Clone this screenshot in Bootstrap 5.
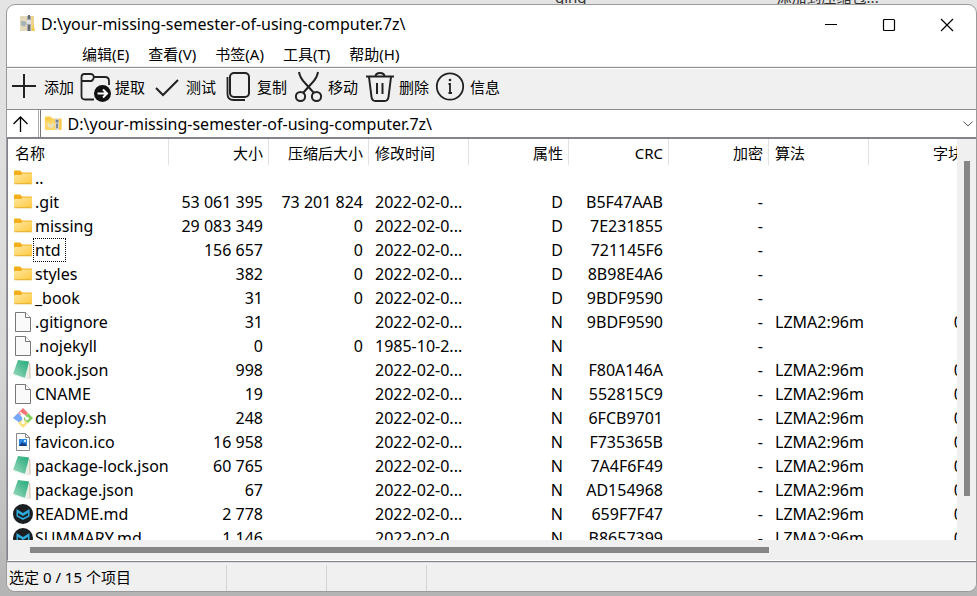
<!DOCTYPE html>
<html lang="zh-CN">
<head>
<meta charset="utf-8">
<meta name="viewport" content="width=device-width, initial-scale=1">
<title>D:\your-missing-semester-of-using-computer.7z\</title>
<link href="https://cdn.jsdelivr.net/npm/bootstrap@5.3.0/dist/css/bootstrap.min.css" rel="stylesheet">
<style>
body{font-family:"Noto Sans","Noto Sans CJK SC",sans-serif;font-size:15px;line-height:24px;color:#000;background:linear-gradient(#e4e4e4,#d8d8d8 60%,#b4b4b4)}
.desk-top{height:4px;font-size:15px;line-height:14px;background:#e4e4e4}
.desk-top span{margin-top:-10px;color:#333}
.desk-top .word-a{margin-left:555px}
.desk-top .word-b{margin-left:190px}
.desk-bottom{height:4px}
.app{margin-left:6px;border:1px solid #9a9a9a;border-radius:9px;background:#fff}
.titlebar{height:37px;padding-left:10px;font-size:16px}
.win-btn{width:58px;padding:0;border:0;background:none}
.menus{height:24px;padding-left:75px;gap:19px}
.menus button,.tools button,.up{padding:0;border:0;background:none;color:#000}
.menu-gap{height:1px;background:#f0f0f0}
.tools{background:#f0f0f0;border-top:1px solid #8e8e8e;box-shadow:inset 0 1px #fff;height:42px;gap:5px;padding-left:1px;padding-bottom:3px}
.tools button{gap:4px}
.address{border-top:1px solid #8a8a8a;border-bottom:2px solid #83838d;height:30px}
.up{width:32px;padding-right:4px;border-right:1px solid #aaa}
.combo{border-left:1px solid #777;margin-left:1px;padding-left:3px}
.combo .form-select{border:0;box-shadow:none;font-size:16px;line-height:24px;color:#000;padding:0 24px 0 5px;border-radius:0;background-image:url("data:image/svg+xml,%3csvg xmlns='http://www.w3.org/2000/svg' viewBox='0 0 12 12'%3e%3cpath fill='none' stroke='%23555' d='M1.500 3.500 6 8l4.500-4.500'/%3e%3c/svg%3e");background-size:12px;background-position:right 2px center}
.list-pane{border-left:1px solid #83838d;border-bottom:1px solid #fff}
.file-table{table-layout:fixed;width:961px}
.file-table th{height:27px;padding:0 6px;font-weight:400;background-image:linear-gradient(#e2e2e2,#e2e2e2);background-size:1px 26px;background-position:right top;background-repeat:no-repeat;white-space:nowrap}
.file-table td{height:24px;padding:0 6px;font-size:16px;white-space:nowrap;overflow:hidden;text-overflow:clip}
.file-table td:first-child{padding-left:5px}
.file-table .name-col{width:161px;padding-left:7px}
.file-icon{width:20px;height:20px;display:block;flex:none}
.file-name{padding:0 5px 0 2px}
.file-name.focused{outline:1px dotted #000;outline-offset:-1px}
.vbar{width:19px;background:#f0f0f0;padding:22px 6px 64px 7px}
.hbar{height:20px;background:#f0f0f0;padding:7px 188px 7px 22px}
.thumb{background:#868686}
.statusbar{background:#f0f0f0;border-top:1px solid #83868c;box-shadow:inset 0 1px #dcdcdc;height:30px;padding-top:3px;border-radius:0 0 8px 8px}
.statusbar div{border-right:1px solid #d4d4d4;width:100px}
.statusbar .status-main{width:220px;padding-left:2px}
</style>
<script src="https://cdn.jsdelivr.net/npm/bootstrap@5.3.0/dist/js/bootstrap.bundle.min.js"></script>
</head>
<body class="vh-100 overflow-hidden d-flex flex-column">
<svg class="position-absolute" width="0" height="0" aria-hidden="true">
<linearGradient id="gf" x2="1" y2="1"><stop stop-color="#ffe7a0"/><stop offset="1" stop-color="#fdc93f"/></linearGradient>
<linearGradient id="gb" x1="1" x2="0" y2="1"><stop stop-color="#1fa777"/><stop offset="1" stop-color="#9fdcc0"/></linearGradient>
<symbol id="folder" viewBox="0 0 20 20"><path d="M1 3.500q0-1 1-1h5l2 2h9q1 0 1 1V8H1z" fill="#f3ae1b"/><path d="M1 7h7l1.500-1.500H19V15q0 1-1 1H2q-1 0-1-1z" fill="url(#gf)"/><path d="M1.500 15.800h17" stroke="#e0a020" stroke-width=".8"/></symbol>
<symbol id="doc" viewBox="0 0 20 20"><path d="M2.500.500h10l5 5v14h-15z" fill="#fafafa" stroke="#777"/><path d="M12.500.500v5h5" fill="#fff" stroke="#777"/></symbol>
<symbol id="book" viewBox="0 0 20 20"><path d="m14 2 3.500 1 .5 15-5 1.800z" fill="#eeece6"/><path d="m16.500 3 .5 16" stroke="#d6cbb0" fill="none"/><path d="M5 0l11 1.500L12 18 0 14z" fill="url(#gb)"/><path d="m0 14 12 4v1.500L1 15z" fill="#e7f3ec"/></symbol>
<symbol id="git" viewBox="0 0 20 20"><path d="m10 0 5 5-3 3-4-1-3-2z" fill="#f87373"/><path d="m5 5 5 5v5l-3 0-7-5z" fill="#75a7fb"/><path d="m15 5 5 5-5 5-5-4z" fill="#83cf62"/><path d="m5 15 5-4 5 4-5 5z" fill="#fde27b"/><path d="m7 4 3 3v8M10 7l4 3.500" stroke="#fff" stroke-width="1.500" fill="none"/><circle cx="10" cy="7.500" r="1.800" fill="#fff"/><circle cx="14" cy="10.500" r="1.800" fill="#fff"/><circle cx="10" cy="14.500" r="1.800" fill="#fff"/></symbol>
<symbol id="pic" viewBox="0 0 20 20"><path d="M3.500 1.500h9l4 4v13h-13z" fill="#fbfbfb" stroke="#8a8a8a"/><path d="M12.500 1.500v4h4" fill="none" stroke="#8a8a8a"/><path d="M6 7h8v7H6z" fill="#2a8be0"/><path d="m6 14 3-4 2 2 1-1 2 3z" fill="#123a86"/><circle cx="12" cy="9" r="1" fill="#fff"/></symbol>
<symbol id="md" viewBox="0 0 20 20"><circle cx="10" cy="10" r="10" fill="#1c1f22"/><path d="m3.500 5 6.500 4 6.500-4v7.500L10 16l-6.500-3.500z" fill="#2eaadc"/><path d="m5 9 5 3 5-3v2.500L10 14l-5-2.500z" fill="#1c1f22"/></symbol>
<symbol id="zip" viewBox="0 0 20 20"><path d="M1 3.500q0-1 1-1h5l2 2h9q1 0 1 1V16q0 1-1 1H2q-1 0-1-1z" fill="#fbcb4c"/><path d="M1 7h7l1.500-1.500H12V17H2q-1 0-1-1z" fill="#fdd667"/><path d="M12 4.500h4V17h-4z" fill="#d8dde4"/><path d="M12.500 6h3v3h-3zM13 10h2v5h-2z" fill="#77818d"/><path d="m3 11 2-2 2 3 3-3 1 4-3 2-3-1z" fill="#e9e3bd"/></symbol>
</svg>
<div class="desk-top d-flex flex-shrink-0 overflow-hidden"><span class="word-a">ging</span><span class="word-b">添加到压缩包...</span></div>
<main class="app flex-grow-1 d-flex flex-column overflow-hidden">
<header class="titlebar d-flex align-items-stretch flex-shrink-0">
<div class="d-flex align-items-center gap-1 flex-grow-1">
<svg width="20" height="18" viewBox="-1 0 20 18" aria-hidden="true"><path d="M2 1h14v15H2z" fill="#edd58f"/><path d="M2 1h7v15H2z" fill="#e4d9b8"/><path d="M9 1h4v15H9z" fill="#a5a9ad"/><path d="M10 0h2v4h-2zM10 10h2v6h-2z" fill="#666b70"/><path d="M9 5h4v4H9z" fill="#dce0e3"/><path d="M3 6h4l2 3-3 3-3-2z" fill="#a9b4b9"/><path d="M15 8l2 8h-3z" fill="#f1c84b"/></svg>
<span>D:\your-missing-semester-of-using-computer.7z\</span></div>
<button class="win-btn" aria-label="最小化"><svg width="14" height="14" viewBox="0 0 14 14"><path d="M1 6.500h12" stroke="#000"/></svg></button>
<button class="win-btn" aria-label="最大化"><svg width="14" height="14" viewBox="0 0 14 14"><rect x="1.500" y="1.500" width="11" height="11" rx="1" fill="none" stroke="#000" stroke-width="1.200"/></svg></button>
<button class="win-btn" aria-label="关闭"><svg width="14" height="14" viewBox="0 0 14 14"><path d="m1 1 12 12M13 1 1 13" stroke="#000" stroke-width="1.200"/></svg></button>
</header>
<nav class="menus d-flex align-items-center flex-shrink-0"><button>编辑(E)</button><button>查看(V)</button><button>书签(A)</button><button>工具(T)</button><button>帮助(H)</button></nav>
<div class="menu-gap flex-shrink-0"></div>
<div class="tools d-flex align-items-center flex-shrink-0" role="toolbar">
<button class="d-flex align-items-center"><svg width="32" height="32" viewBox="0 0 32 32" fill="none" stroke="#222" stroke-width="2"><path d="M16 3v24M4 15h24"/></svg>添加</button>
<button class="d-flex align-items-center"><svg width="32" height="32" viewBox="0 0 32 32" fill="none" stroke="#222" stroke-width="1.800"><path d="M15 28.500H6q-3.500 0-3.500-3.500V6Q2.500 3 5.500 3H12q2 0 3 3h11q4 0 4 4v4M3 10h9q2 0 3-4"/><circle cx="23.500" cy="22.500" r="8.500" fill="#111" stroke="none"/><path d="M18.500 22.500h9M24 18.500l4 4-4 4" stroke="#fff" stroke-width="2"/></svg>提取</button>
<button class="d-flex align-items-center"><svg width="32" height="32" viewBox="0 0 32 32" fill="none" stroke="#222" stroke-width="2"><path d="m6 17 7 7L28 9"/></svg>测试</button>
<button class="d-flex align-items-center"><svg width="32" height="32" viewBox="0 0 32 32" fill="none" stroke="#222" stroke-width="2"><rect x="9" y="2" width="19" height="24" rx="4"/><path d="M6.500 6v17q0 6 6 6H24" stroke-width="1.800"/></svg>复制</button>
<button class="d-flex align-items-center"><svg width="32" height="32" viewBox="0 0 32 32" fill="none" stroke="#222" stroke-width="2"><path d="M7 1q1 6 6 11l9 10M26 1q-1 6-6 11l-9 10"/><circle cx="8.500" cy="25.500" r="4.600"/><circle cx="24.500" cy="25.500" r="4.600"/></svg>移动</button>
<button class="d-flex align-items-center"><svg width="32" height="32" viewBox="0 0 32 32" fill="none" stroke="#222" stroke-width="2"><path d="M3 5.500h28M6 6l2.500 20q.5 4 4 4h9q3.500 0 4-4L28 6M12.500 5.500q0-3.500 4.500-3.500t4.500 3.500M14 12v11M19.500 12v11"/></svg>删除</button>
<button class="d-flex align-items-center"><svg width="32" height="32" viewBox="0 0 32 32" fill="none" stroke="#222" stroke-width="1.800"><circle cx="16" cy="15.500" r="13.200"/><path d="M14.500 13H16v8.500M14.500 22h3.500"/><circle cx="16" cy="9" r="1.300" fill="#222" stroke="none"/></svg>信息</button>
</div>
<div class="address d-flex flex-shrink-0">
<button class="up d-flex align-items-center justify-content-center" aria-label="向上"><svg width="18" height="18" viewBox="0 0 18 18" fill="none" stroke="#000" stroke-width="1.300"><path d="M8.500 17V2M1.500 9l7-7 7 7"/></svg></button>
<div class="combo d-flex align-items-center flex-grow-1"><svg width="19" height="19" aria-hidden="true"><use href="#zip"/></svg><select class="form-select" aria-label="路径"><option>D:\your-missing-semester-of-using-computer.7z\</option></select></div>
</div>
<div class="list-pane d-flex flex-grow-1 overflow-hidden">
<div class="d-flex flex-column flex-grow-1 overflow-hidden">
<div class="flex-grow-1 overflow-hidden">
<table class="file-table"><thead><tr><th class="name-col">名称</th><th class="text-end">大小</th><th class="text-end">压缩后大小</th><th>修改时间</th><th class="text-end">属性</th><th class="text-end">CRC</th><th class="text-end">加密</th><th>算法</th><th class="text-end">字块</th></tr></thead><tbody id="files"></tbody></table>
</div>
<div class="hbar flex-shrink-0"><div class="thumb h-100"></div></div>
</div>
<div class="vbar flex-shrink-0"><div class="thumb h-100"></div></div>
</div>
<footer class="statusbar d-flex flex-shrink-0"><div class="status-main">选定 0 / 15 个项目</div><div></div><div></div></footer>
</main>
<div class="desk-bottom flex-shrink-0"></div>
<script>
const files=[
["folder","..","","","","","",""],
["folder",".git","53 061 395","73 201 824","2022-02-07","D","B5F47AAB",""],
["folder","missing","29 083 349","0","2022-02-07","D","7E231855",""],
["folder","ntd","156 657","0","2022-02-07","D","721145F6",""],
["folder","styles","382","0","2022-02-07","D","8B98E4A6",""],
["folder","_book","31","0","2022-02-07","D","9BDF9590",""],
["doc",".gitignore","31","","2022-02-07","N","9BDF9590","LZMA2:96m"],
["doc",".nojekyll","0","0","1985-10-26","N","",""],
["book","book.json","998","","2022-02-07","N","F80A146A","LZMA2:96m"],
["doc","CNAME","19","","2022-02-07","N","552815C9","LZMA2:96m"],
["git","deploy.sh","248","","2022-02-07","N","6FCB9701","LZMA2:96m"],
["pic","favicon.ico","16 958","","2022-02-07","N","F735365B","LZMA2:96m"],
["book","package-lock.json","60 765","","2022-02-07","N","7A4F6F49","LZMA2:96m"],
["book","package.json","67","","2022-02-07","N","AD154968","LZMA2:96m"],
["md","README.md","2 778","","2022-02-07","N","659F7F47","LZMA2:96m"],
["md","SUMMARY.md","1 146","","2022-02-07","N","B8657399","LZMA2:96m"]];
document.getElementById("files").innerHTML=files.map(([icon,name,size,packed,date,attr,crc,algo])=>`<tr><td><div class="d-flex align-items-center"><svg class="file-icon"><use href="#${icon}"/></svg><span class="file-name${name==="ntd"?" focused":""}">${name}</span></div></td><td class="text-end">${size}</td><td class="text-end">${packed}</td><td>${date?date.slice(0,9)+"...":""}</td><td class="text-end">${attr}</td><td class="text-end">${crc}</td><td class="text-end">${attr?"-":""}</td><td>${algo}</td><td class="text-end">${algo?"0":""}</td></tr>`).join("");
</script>
</body>
</html>
